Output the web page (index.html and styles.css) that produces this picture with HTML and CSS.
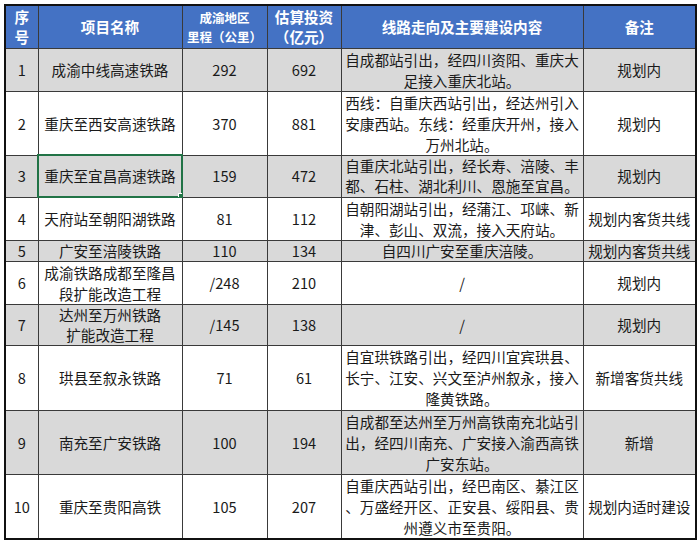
FILE: index.html
```html
<!DOCTYPE html>
<html lang="zh-CN">
<head>
<meta charset="utf-8">
<title>成渝地区铁路项目</title>
<link rel="stylesheet" href="styles.css">
</head>
<body>
<table class="grid">
  <colgroup>
    <col class="c1"><col class="c2"><col class="c3"><col class="c4"><col class="c5"><col class="c6">
  </colgroup>
  <thead>
    <tr class="h43">
      <th>序<br>号</th>
      <th>项目名称</th>
      <th class="small">成渝地区<br>里程（公里）</th>
      <th>估算投资<br>（亿元）</th>
      <th>线路走向及主要建设内容</th>
      <th>备注</th>
    </tr>
  </thead>
  <tbody>
    <tr class="gray h43">
      <td>1</td><td>成渝中线高速铁路</td><td>292</td><td>692</td>
      <td>自成都站引出，经四川资阳、重庆大<br>足接入重庆北站。</td><td>规划内</td>
    </tr>
    <tr class="h64">
      <td>2</td><td>重庆至西安高速铁路</td><td>370</td><td>881</td>
      <td>西线：自重庆西站引出，经达州引入<br>安康西站。东线：经重庆开州，接入<br>万州北站。</td><td>规划内</td>
    </tr>
    <tr class="gray h42">
      <td>3</td><td class="sel">重庆至宜昌高速铁路</td><td>159</td><td>472</td>
      <td>自重庆北站引出，经长寿、涪陵、丰<br>都、石柱、湖北利川、恩施至宜昌。</td><td>规划内</td>
    </tr>
    <tr class="h43">
      <td>4</td><td>天府站至朝阳湖铁路</td><td>81</td><td>112</td>
      <td>自朝阳湖站引出，经蒲江、邛崃、新<br>津、彭山、双流，接入天府站。</td><td>规划内客货共线</td>
    </tr>
    <tr class="gray h21">
      <td>5</td><td>广安至涪陵铁路</td><td>110</td><td>134</td>
      <td>自四川广安至重庆涪陵。</td><td>规划内客货共线</td>
    </tr>
    <tr class="h43">
      <td>6</td><td>成渝铁路成都至隆昌<br>段扩能改造工程</td><td>/248</td><td>210</td>
      <td>/</td><td>规划内</td>
    </tr>
    <tr class="gray h41">
      <td>7</td><td>达州至万州铁路<br>扩能改造工程</td><td>/145</td><td>138</td>
      <td>/</td><td>规划内</td>
    </tr>
    <tr class="h65">
      <td>8</td><td>珙县至叙永铁路</td><td>71</td><td>61</td>
      <td>自宜珙铁路引出，经四川宜宾珙县、<br>长宁、江安、兴文至泸州叙永，接入<br>隆黄铁路。</td><td>新增客货共线</td>
    </tr>
    <tr class="gray h64">
      <td>9</td><td>南充至广安铁路</td><td>100</td><td>194</td>
      <td>自成都至达州至万州高铁南充北站引<br>出，经四川南充、广安接入渝西高铁<br>广安东站。</td><td>新增</td>
    </tr>
    <tr class="h64">
      <td>10</td><td>重庆至贵阳高铁</td><td>105</td><td>207</td>
      <td>自重庆西站引出，经巴南区、綦江区<br>、万盛经开区、正安县、绥阳县、贵<br>州遵义市至贵阳。</td><td>规划内适时建设</td>
    </tr>
  </tbody>
</table>
</body>
</html>
```

FILE: styles.css
```css
html, body {
  margin: 0;
  padding: 0;
  background: #ffffff;
}

body {
  font-family: "Noto Sans CJK SC", "Noto Sans", sans-serif;
  color: #1a1a1a;
}

.grid {
  margin: 4px 0 0 4px;
  width: 691px;
  table-layout: fixed;
  border-collapse: collapse;
  border: 2px solid #111111;
}

.c1 { width: 33px; }
.c2 { width: 144px; }
.c3 { width: 85px; }
.c4 { width: 74px; }
.c5 { width: 242px; }
.c6 { width: 113px; }

.grid th,
.grid td {
  border: 1px solid #3a3a3a;
  padding: 0;
  text-align: center;
  vertical-align: middle;
  white-space: nowrap;
  overflow: hidden;
  font-size: 14.6px;
  line-height: 21px;
}

.grid th {
  background: #4472c4;
  color: #ffffff;
  font-weight: bold;
  line-height: 20px;
}

.grid th.small {
  font-size: 12.5px;
  line-height: 19px;
}

.gray td {
  background: #d9d9d9;
}

.h21 { height: 21px; }
.h41 { height: 41px; }
.h42 { height: 42px; }
.h43 { height: 43px; }
.h64 { height: 64px; }
.h65 { height: 65px; }

.h21 td,
.h41 td,
.h42 td {
  line-height: 20px;
}

.grid td.sel {
  position: relative;
  outline: 2px solid #217346;
  outline-offset: -1px;
}

.grid td.sel::after {
  content: "";
  position: absolute;
  right: -3px;
  bottom: -3px;
  width: 5px;
  height: 5px;
  background: #217346;
  border: 1px solid #ffffff;
}
```
